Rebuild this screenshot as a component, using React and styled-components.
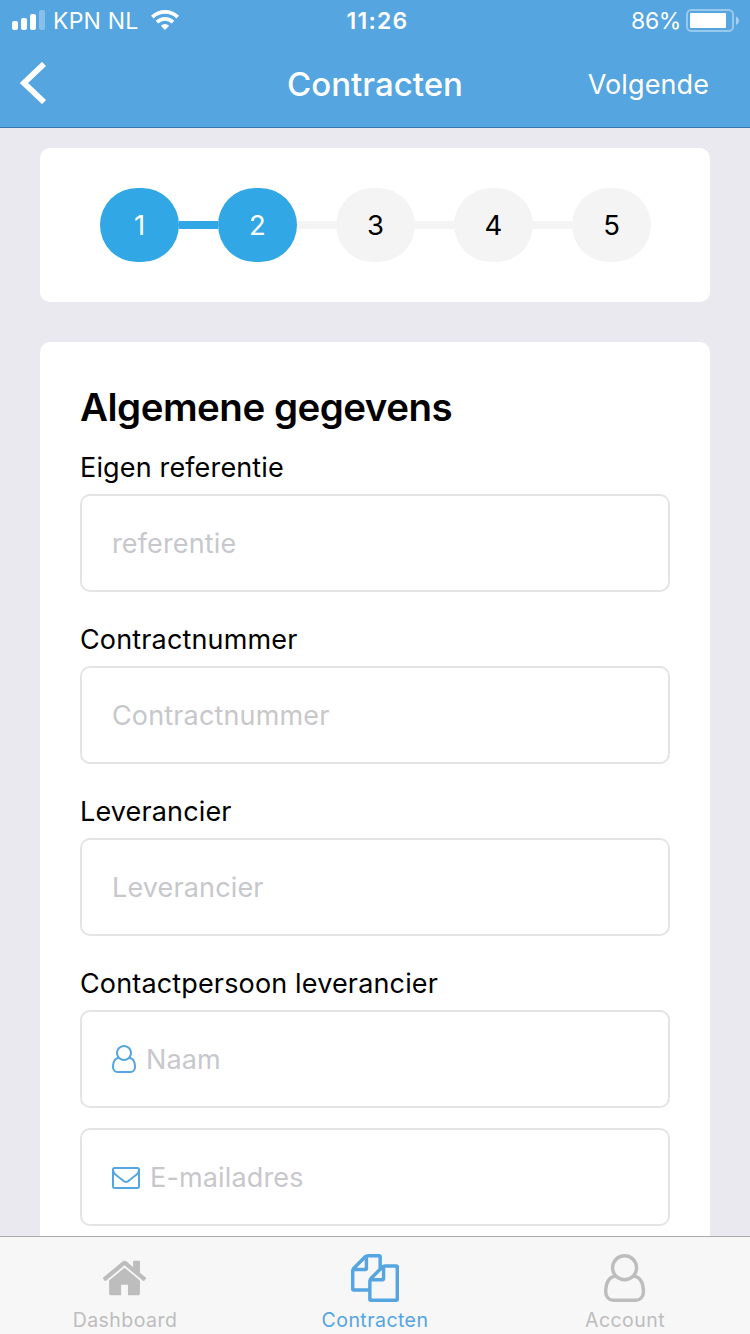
import React from "react";
import styled, { createGlobalStyle } from "styled-components";

const icons = {
  home: {
    viewBox: "92 0 1664 1792",
    width: 1664,
    path: "M1472 992v480q0 26-19 45t-45 19h-384v-384h-256v384h-384q-26 0-45-19t-19-45v-480q0-1 .5-3t.5-3l575-474 575 474q1 2 1 6zm223-69l-62 74q-8 9-21 11h-3q-13 0-21-7l-692-577-692 577q-12 8-24 7-13-2-21-11l-62-74q-8-10-7-23.5t11-21.5l719-599q32-26 76-26t76 26l244 204v-195q0-14 9-23t23-9h192q14 0 23 9t9 23v408l219 182q10 8 11 21.5t-7 23.5z",
  },
  files: {
    viewBox: "0 0 1792 1792",
    width: 1792,
    path: "M1696 384q40 0 68 28t28 68v1216q0 40-28 68t-68 28h-960q-40 0-68-28t-28-68v-288h-544q-40 0-68-28t-28-68v-672q0-40 20-88t48-76l408-408q28-28 76-48t88-20h416q40 0 68 28t28 68v328q68-40 128-40h416zm-544 213l-299 299h299v-299zm-640-384l-299 299h299v-299zm196 647l316-316v-416h-384v416q0 40-28 68t-68 28h-416v640h512v-256q0-40 20-88t48-76zm956 804v-1152h-384v416q0 40-28 68t-68 28h-416v640h896z",
  },
  user: {
    viewBox: "128 0 1536 1792",
    width: 1536,
    path: "M1329 784q47 14 89.5 38t89 73 79.5 115.5 55 172 22 236.5q0 154-100 263.5t-241 109.5h-854q-141 0-241-109.5t-100-263.5q0-131 22-236.5t55-172 79.5-115.5 89-73 89.5-38q-79-125-79-272 0-104 40.5-198.5t109.5-163.5 163.5-109.5 198.5-40.5 198.5 40.5 163.5 109.5 109.5 163.5 40.5 198.5q0 147-79 272zm-433-656q-159 0-271.5 112.5t-112.5 271.5 112.5 271.5 271.5 112.5 271.5-112.5 112.5-271.5-112.5-271.5-271.5-112.5zm427 1536q88 0 150.5-71.5t62.5-173.5q0-239-78.5-377t-225.5-145q-145 127-336 127t-336-127q-147 7-225.5 145t-78.5 377q0 102 62.5 173.5t150.5 71.5h854z",
  },
  envelope: {
    viewBox: "0 0 1792 1792",
    width: 1792,
    path: "M1664 1504v-768q-32 36-69 66-268 206-426 338-51 43-83 67t-86.5 48.5-102.5 24.5h-2q-48 0-102.5-24.5t-86.5-48.5-83-67q-158-132-426-338-37-30-69-66v768q0 13 9.5 22.5t22.5 9.5h1472q13 0 22.5-9.5t9.5-22.5zm0-1051v-24.5l-.5-13-3-12.5-5.5-9-9-7.5-14-2.5h-1472q-13 0-22.5 9.5t-9.5 22.5q0 168 147 284 193 152 401 317 6 5 35 29.5t46 37.5 44.5 31.5 50.5 27.5 43 9h2q20 0 43-9t50.5-27.5 44.5-31.5 46-37.5 35-29.5q208-165 401-317 54-43 100.5-115.5t46.5-131.5zm128-37v1088q0 66-47 113t-113 47h-1472q-66 0-113-47t-47-113v-1088q0-66 47-113t113-47h1472q66 0 113 47t47 113z",
  },
};

const steps = [1, 2, 3, 4, 5];
const currentStep = 2;

const fields = [
  { label: "Eigen referentie", placeholder: "referentie" },
  { label: "Contractnummer", placeholder: "Contractnummer" },
  { label: "Leverancier", placeholder: "Leverancier" },
  { label: "Contactpersoon leverancier", placeholder: "Naam", icon: "user" },
  { placeholder: "E-mailadres", icon: "envelope" },
];

const tabs = [
  { name: "Dashboard", icon: "home" },
  { name: "Contracten", icon: "files", active: true },
  { name: "Account", icon: "user" },
];

const GlobalStyle = createGlobalStyle`
  * {
    box-sizing: border-box;
  }
  body {
    margin: 0;
    font-family: Inter, "Liberation Sans", sans-serif;
    color: #000;
  }
`;

const Screen = styled.div`
  width: 750px;
  height: 1334px;
  display: flex;
  flex-direction: column;
  overflow: hidden;
  background-color: #e9e9ef;
`;

const Header = styled.header`
  flex: none;
  height: 128px;
  background-color: #54a5e0;
  border-bottom: 1px solid #3576ac;
  color: #fff;
`;

const StatusBar = styled.div`
  height: 40px;
  padding: 0 11px 0 12px;
  display: grid;
  grid-template-columns: 1fr auto 1fr;
  align-items: center;
  font-size: 23px;
  line-height: 40px;
  svg {
    display: block;
  }
  span {
    padding-top: 2px;
    line-height: 38px;
  }
  .left,
  .right {
    display: flex;
    align-items: center;
  }
  .left {
    gap: 8px;
    letter-spacing: 0.2px;
  }
  .left .wifi {
    margin-left: 5px;
  }
  .right {
    justify-content: flex-end;
    gap: 5px;
    letter-spacing: -0.4px;
  }
  .time {
    padding-left: 4px;
    font-weight: 600;
    letter-spacing: 1.2px;
  }
`;

const NavBar = styled.div`
  height: 87px;
  padding: 0 41px 0 20px;
  display: grid;
  grid-template-columns: 1fr auto 1fr;
  align-items: center;
  svg {
    margin-bottom: 1px;
  }
  h1 {
    margin: 0 0 0 21px;
    font-size: 33px;
    font-weight: 500;
    line-height: 40px;
  }
  a {
    justify-self: end;
    margin-top: 1px;
    font-size: 27px;
    letter-spacing: 0.1px;
  }
`;

const Content = styled.main`
  flex: 1;
  min-height: 0;
  overflow: hidden;
  padding: 20px 40px 0;
`;

const Card = styled.section`
  background-color: #fff;
  border-radius: 10px;
  padding: 40px;
  margin-bottom: 40px;
`;

const Stepper = styled.div`
  display: flex;
  align-items: center;
  padding: 0 20px;
`;

const Step = styled.div`
  flex: none;
  width: 79px;
  height: 74px;
  border-radius: 38px;
  display: flex;
  align-items: center;
  justify-content: center;
  font-size: 27.5px;
  background-color: ${({ $done }) => ($done ? "#32a7e6" : "#f4f4f4")};
  color: ${({ $done }) => ($done ? "#fff" : "#000")};
`;

const Connector = styled.div`
  flex: none;
  width: 39px;
  height: 8px;
  background-color: ${({ $done }) => ($done ? "#32a7e6" : "#f4f4f4")};
`;

const Title = styled.h2`
  margin: 0;
  font-size: 38.5px;
  font-weight: 600;
  line-height: 50px;
  letter-spacing: -0.5px;
`;

const Label = styled.div`
  height: 36px;
  margin-top: ${({ $first }) => ($first ? "18px" : "30px")};
  margin-bottom: 8px;
  font-size: 27px;
  line-height: 36px;
  letter-spacing: 0.15px;
`;

const Input = styled.div`
  height: 98px;
  padding: 0 30px;
  margin-top: ${({ $stacked }) => ($stacked ? "20px" : "0")};
  display: flex;
  align-items: center;
  gap: 10px;
  border: 2px solid #e4e4e4;
  border-radius: 10px;
  color: #c7c7cc;
  font-size: 27px;
  letter-spacing: 0.15px;
`;

const Glyph = styled.svg`
  display: block;
  flex: none;
  width: ${({ $width }) => $width}px;
  height: ${({ $height }) => $height}px;
  fill: ${({ $color }) => $color};
`;

const TabBar = styled.nav`
  flex: none;
  height: 98px;
  display: grid;
  grid-template-columns: repeat(3, 1fr);
  background-color: #f7f7f7;
  border-top: 1px solid #a9abad;
`;

const Tab = styled.div`
  padding-top: 17px;
  display: flex;
  flex-direction: column;
  align-items: center;
  font-size: 19.5px;
  line-height: 24px;
  letter-spacing: 0.45px;
  color: ${({ $active }) => ($active ? "#54a5e0" : "#bdbdbd")};
  span {
    margin-top: 6px;
  }
`;

function Icon({ name, size, color }) {
  const { viewBox, width, path } = icons[name];
  return (
    <Glyph
      $width={(size * width) / 1792}
      $height={size}
      $color={color}
      viewBox={viewBox}
    >
      <path d={path} />
    </Glyph>
  );
}

function Signal() {
  return (
    <svg width="33" height="20" viewBox="0 0 33 20" fill="#fff">
      <rect x="0" y="11" width="6" height="9" rx="2" />
      <rect x="9" y="8" width="6" height="12" rx="2" />
      <rect x="18" y="4" width="6" height="16" rx="2" />
      <rect x="27" y="0" width="6" height="20" rx="2" opacity="0.3" />
    </svg>
  );
}

function Wifi() {
  return (
    <svg className="wifi" width="28" height="20" viewBox="0 0 28 20">
      <g fill="none" stroke="#fff" strokeWidth="3.8">
        <path d="M1.3 7.1a18.2 18.2 0 0 1 25.4 0" />
        <path d="M6 12.1a11.4 11.4 0 0 1 16 0" />
      </g>
      <path d="M14 20l-4.2-4.2a6 6 0 0 1 8.4 0z" fill="#fff" />
    </svg>
  );
}

function Battery() {
  return (
    <svg width="53" height="23" viewBox="0 0 53 23">
      <rect
        x="1"
        y="1"
        width="46"
        height="21"
        rx="4.5"
        fill="none"
        stroke="#fff"
        strokeOpacity="0.4"
        strokeWidth="2"
      />
      <rect x="4" y="4" width="36" height="15" rx="1" fill="#fff" />
      <path d="M50 7.5a4.6 4.6 0 0 1 0 8.5z" fill="#fff" opacity="0.5" />
    </svg>
  );
}

function App() {
  return (
    <Screen>
      <GlobalStyle />
      <Header>
        <StatusBar>
          <div className="left">
            <Signal />
            <span>KPN NL</span>
            <Wifi />
          </div>
          <span className="time">11:26</span>
          <div className="right">
            <span>86%</span>
            <Battery />
          </div>
        </StatusBar>
        <NavBar>
          <svg width="26" height="42" viewBox="0 0 26 42">
            <path
              d="M24 2L4 21l20 19"
              fill="none"
              stroke="#fff"
              strokeWidth="5.8"
            />
          </svg>
          <h1>Contracten</h1>
          <a>Volgende</a>
        </NavBar>
      </Header>
      <Content>
        <Card>
          <Stepper>
            {steps.map((step) => (
              <React.Fragment key={step}>
                {step > 1 && <Connector $done={step <= currentStep} />}
                <Step $done={step <= currentStep}>{step}</Step>
              </React.Fragment>
            ))}
          </Stepper>
        </Card>
        <Card>
          <Title>Algemene gegevens</Title>
          {fields.map(({ label, placeholder, icon }, index) => (
            <React.Fragment key={placeholder}>
              {label && <Label $first={index === 0}>{label}</Label>}
              <Input $stacked={!label}>
                {icon && <Icon name={icon} size={28} color="#54a5e0" />}
                <span>{placeholder}</span>
              </Input>
            </React.Fragment>
          ))}
        </Card>
      </Content>
      <TabBar>
        {tabs.map(({ name, icon, active }) => (
          <Tab key={name} $active={active}>
            <Icon name={icon} size={48} color="currentColor" />
            <span>{name}</span>
          </Tab>
        ))}
      </TabBar>
    </Screen>
  );
}

export default App;
